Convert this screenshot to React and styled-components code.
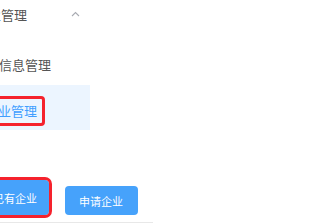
import styled, { createGlobalStyle } from "styled-components";

const GlobalStyle = createGlobalStyle`
    body {
        margin: 0;
        background: #fff;
        font-family: "Noto Sans CJK SC", "Noto Sans", sans-serif;
        overflow: hidden;
    }
`;

const Page = styled.div`
    width: 320px;
    height: 224px;
    overflow: hidden;
`;

const Menu = styled.div`
    margin-left: -50px;
    width: 140px;
`;

const SubmenuTitle = styled.div`
    height: 28px;
    display: flex;
    align-items: center;
    justify-content: space-between;
    padding: 0 10px 0 25px;
    font-size: 13px;
    color: #555;
`;

const Items = styled.div`
    margin-top: 12px;
`;

const Item = styled.div`
    box-sizing: border-box;
    height: 45px;
    display: flex;
    align-items: center;
    padding: 3px 0 0 ${p => p.$indent}px;
    font-size: 13px;
    color: ${p => p.$active ? "#409eff" : "#555"};
    background: ${p => p.$active ? "#ecf5ff" : "transparent"};
`;

const Marked = styled.span`
    display: inline-block;
    margin-top: 3px;
    line-height: 18px;
    padding: 3px 5px;
    border: 3px solid #f5222d;
    border-radius: 4px;
`;

const Toolbar = styled.div`
    margin-top: 50px;
    margin-left: -21px;
    width: 174px;
    display: flex;
    align-items: flex-end;
    gap: 16px;
    padding-bottom: 7px;
    border-bottom: 1px solid #e8e8e8;
`;

const Button = styled.button`
    height: ${p => p.$tall ? 35 : 29}px;
    padding: ${p => p.$tall ? "0 12px 0 14px" : "0 15px 0 14px"};
    border: none;
    border-radius: 4px;
    background: #46a2fb;
    color: #fff;
    font-family: inherit;
    font-size: 11px;
    white-space: nowrap;
    outline: ${p => p.$marked ? "3px solid #f5222d" : "none"};
`;

const Chevron = () => (
    <svg width="9" height="6" viewBox="0 0 9 6" fill="none">
        <path d="M1 5L4.5 1.5L8 5" stroke="#a8abb2" strokeWidth="1.1" />
    </svg>
);

export default function App() {
    return (
        <Page>
            <GlobalStyle />
            <Menu>
                <SubmenuTitle>
                    <span>企业管理</span>
                    <Chevron />
                </SubmenuTitle>
                <Items>
                    <Item $indent={49}>信息管理</Item>
                    <Item $indent={27} $active>
                        <Marked>企业管理</Marked>
                    </Item>
                </Items>
            </Menu>
            <Toolbar>
                <Button $tall $marked>已有企业</Button>
                <Button>申请企业</Button>
            </Toolbar>
        </Page>
    );
}
